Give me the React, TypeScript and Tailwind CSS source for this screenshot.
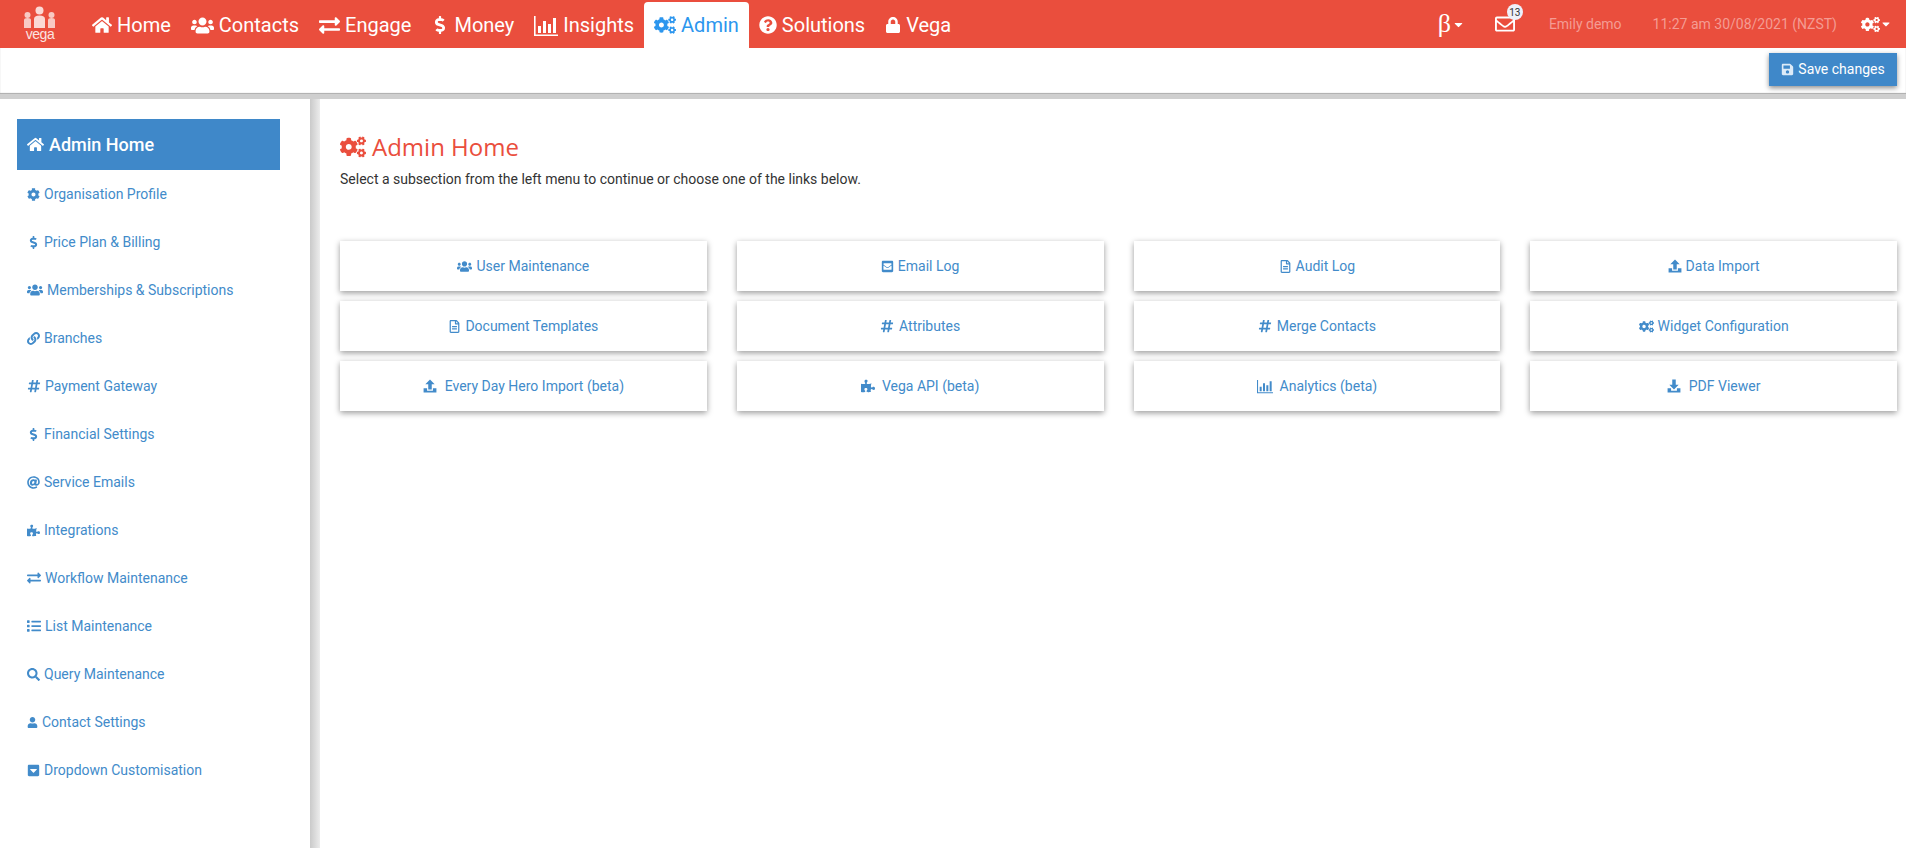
import type { ReactNode } from "react";
import {
  FaAt,
  FaCaretDown,
  FaCaretSquareDown,
  FaCog,
  FaCogs,
  FaDollarSign,
  FaEnvelopeSquare,
  FaExchangeAlt,
  FaHashtag,
  FaHome,
  FaLink,
  FaList,
  FaLock,
  FaPuzzlePiece,
  FaQuestionCircle,
  FaRegEnvelope,
  FaRegFileAlt,
  FaSave,
  FaSearch,
  FaUser,
  FaUsers,
} from "react-icons/fa";

function BarsIcon({ size }: { size: number }) {
  return (
    <svg width={size} height={size} viewBox="0 0 24 24" fill="currentColor" className="shrink-0">
      <path d="M0 3h1.6v18.4H24V23H0z" />
      <path d="M4 13h3v7H4zM9 8h3v12H9zM14 11h3v9h-3zM19 5h3v15h-3z" />
    </svg>
  );
}

function TrayArrow({ size, down }: { size: number; down?: boolean }) {
  return (
    <svg width={size} height={size} viewBox="0 0 24 24" fill="currentColor" className="shrink-0">
      {down ? (
        <path d="M9 1h6v9h5l-8 8-8-8h5z" />
      ) : (
        <path d="M12 1l8 8h-5v9H9V9H4z" />
      )}
      <path d="M1 16h6v4h10v-4h6v7H1z" />
    </svg>
  );
}

function Logo() {
  return (
    <svg width="34" height="36" viewBox="0 0 34 36" className="shrink-0">
      <g fill="#f8c9c3">
        <circle cx="4.5" cy="9" r="3" />
        <path d="M1 14q0-2 3.5-2T8 14v8H1z" />
        <circle cx="28.5" cy="9" r="3" />
        <path d="M25 14q0-2 3.5-2T32 14v8h-7z" />
      </g>
      <g fill="#fbd9d5">
        <circle cx="16.5" cy="4.5" r="4" />
        <path d="M11 13q0-3.500 5.500-3.500T22 13v9H11z" />
      </g>
      <text x="17" y="33" textAnchor="middle" fill="#fbe3e0" fontSize="14" fontFamily="Liberation Sans, sans-serif" letterSpacing="-0.5">
        vega
      </text>
    </svg>
  );
}

const nav: { label: string; icon: ReactNode; active?: boolean }[] = [
  { label: "Home", icon: <FaHome size={20} /> },
  { label: "Contacts", icon: <FaUsers size={23} /> },
  { label: "Engage", icon: <FaExchangeAlt size={21} /> },
  { label: "Money", icon: <FaDollarSign size={18} /> },
  { label: "Insights", icon: <BarsIcon size={24} /> },
  { label: "Admin", icon: <FaCogs size={22} />, active: true },
  { label: "Solutions", icon: <FaQuestionCircle size={18} /> },
  { label: "Vega", icon: <FaLock size={16} /> },
];

const side: { label: string; icon: ReactNode }[] = [
  { label: "Organisation Profile", icon: <FaCog size={13} /> },
  { label: "Price Plan & Billing", icon: <FaDollarSign size={13} /> },
  { label: "Memberships & Subscriptions", icon: <FaUsers size={16} /> },
  { label: "Branches", icon: <FaLink size={13} /> },
  { label: "Payment Gateway", icon: <FaHashtag size={14} /> },
  { label: "Financial Settings", icon: <FaDollarSign size={13} /> },
  { label: "Service Emails", icon: <FaAt size={13} /> },
  { label: "Integrations", icon: <FaPuzzlePiece size={13} /> },
  { label: "Workflow Maintenance", icon: <FaExchangeAlt size={14} /> },
  { label: "List Maintenance", icon: <FaList size={14} /> },
  { label: "Query Maintenance", icon: <FaSearch size={13} /> },
  { label: "Contact Settings", icon: <FaUser size={11} /> },
  { label: "Dropdown Customisation", icon: <FaCaretSquareDown size={13} /> },
];

const cards: { label: string; icon: ReactNode; gap?: string }[] = [
  { label: "User Maintenance", icon: <FaUsers size={15} /> },
  { label: "Email Log", icon: <FaEnvelopeSquare size={13} /> },
  { label: "Audit Log", icon: <FaRegFileAlt size={13} /> },
  { label: "Data Import", icon: <TrayArrow size={14} /> },
  { label: "Document Templates", icon: <FaRegFileAlt size={13} /> },
  { label: "Attributes", icon: <FaHashtag size={14} />, gap: "gap-[5px]" },
  { label: "Merge Contacts", icon: <FaHashtag size={14} />, gap: "gap-[5px]" },
  { label: "Widget Configuration", icon: <FaCogs size={15} /> },
  { label: "Every Day Hero Import (beta)", icon: <TrayArrow size={14} />, gap: "gap-[8px]" },
  { label: "Vega API (beta)", icon: <FaPuzzlePiece size={14} />, gap: "gap-[7px]" },
  { label: "Analytics (beta)", icon: <BarsIcon size={16} />, gap: "gap-[7px]" },
  { label: "PDF Viewer", icon: <TrayArrow size={14} down />, gap: "gap-[8px]" },
];

export default function App() {
  return (
    <div className="flex h-screen flex-col overflow-hidden bg-white font-['Roboto',sans-serif] text-[14px] text-[#333]">
      <header className="flex h-12 shrink-0 items-end bg-[#ea4e3d] text-white">
        <div className="flex h-12 w-[82px] shrink-0 items-center pl-[23px]">
          <Logo />
        </div>
        {nav.map((n) => (
          <a
            key={n.label}
            className={
              n.active
                ? "flex h-[46px] items-center gap-[5px] rounded-t bg-white px-[10px] text-[20px] text-[#2c96ee]"
                : "flex h-[46px] items-center gap-[5px] px-[10px] text-[20px]"
            }
          >
            {n.icon}
            {n.label}
          </a>
        ))}
        <div className="ml-auto flex h-12 items-center self-start pr-[14px]">
          <span className="flex items-center font-['Liberation_Serif',serif] text-[26px] leading-none">
            β
            <FaCaretDown size={13} className="ml-[1px]" />
          </span>
          <span className="relative ml-[30px] flex items-center">
            <FaRegEnvelope size={20} />
            <span className="absolute left-[12px] top-[-10px] flex h-4 w-4 items-center justify-center rounded-full bg-[#eef0fa] text-[10px] text-[#333]">
              13
            </span>
          </span>
          <span className="ml-[34px] text-[#f49c93]">Emily demo</span>
          <span className="ml-[31px] text-[#f49c93]">11:27 am 30/08/2021 (NZST)</span>
          <span className="ml-[24px] flex items-center">
            <FaCogs size={19} />
            <FaCaretDown size={12} />
          </span>
        </div>
      </header>

      <div className="flex h-[51px] shrink-0 justify-end border-b-[5px] border-[#cfcfcf] pr-[9px] pt-[5px] shadow-[inset_0_-1px_1px_#aaa]">
        <button className="flex h-[33px] w-[128px] items-center justify-center gap-[4px] bg-[#3f88c9] text-white shadow-[0_2px_5px_rgba(0,0,0,0.45)]">
          <FaSave size={13} className="text-[#dcebf8]" />
          Save changes
        </button>
      </div>

      <div className="flex min-h-0 flex-1">
        <aside className="w-[310px] shrink-0 pl-[17px] pt-5">
          <div className="flex h-[51px] w-[263px] items-center gap-[5px] bg-[#3f88c9] pl-[10px] text-[18px] font-medium text-white">
            <FaHome size={17} />
            Admin Home
          </div>
          <nav className="text-[#428bca]">
            {side.map((s) => (
              <a key={s.label} className="flex h-12 items-center gap-[4px] pl-[10px]">
                {s.icon}
                {s.label}
              </a>
            ))}
          </nav>
        </aside>
        <div className="w-[10px] shrink-0 bg-gradient-to-r from-[#cacaca] to-[#ececec]" />

        <main className="min-w-0 flex-1 pl-5 pr-[9px]">
          <h1 className="mt-[31px] flex h-[34px] items-center gap-[6px] font-['Open_Sans',sans-serif] text-[24px] text-[#ea4e3d]">
            <FaCogs size={26} />
            Admin Home
          </h1>
          <p className="mt-[5px]">Select a subsection from the left menu to continue or choose one of the links below.</p>
          <div className="mt-[51px] grid grid-cols-4 gap-x-[30px] gap-y-[10px]">
            {cards.map((c) => (
              <a
                key={c.label}
                className={`flex h-[50px] items-center justify-center bg-white text-[#428bca] shadow-[0_2px_6px_rgba(0,0,0,0.4)] ${c.gap ?? "gap-[4px]"}`}
              >
                {c.icon}
                {c.label}
              </a>
            ))}
          </div>
        </main>
      </div>
    </div>
  );
}
